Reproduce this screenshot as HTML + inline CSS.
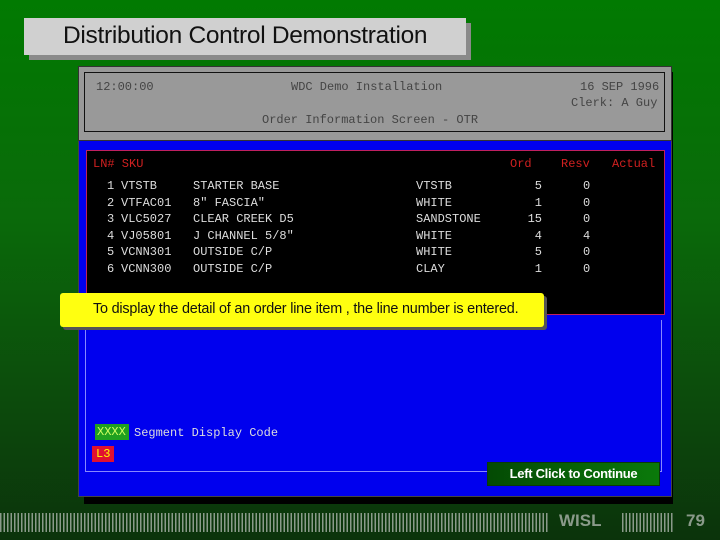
<!DOCTYPE html>
<html><head><style>
*{margin:0;padding:0;box-sizing:border-box}
body{width:720px;height:540px;overflow:hidden;position:relative;background:linear-gradient(#017a01 0%,#0a6a0a 40%,#0c4a0c 75%,#0b330b 100%);font-family:"Liberation Sans",sans-serif}
.a{position:absolute}
.m{font-family:"Liberation Mono",monospace;font-size:12px;white-space:pre;line-height:14px}
.r{position:absolute;font-family:"Liberation Mono",monospace;font-size:12px;color:#ddd;white-space:pre;line-height:16.6px;top:178px}
</style></head><body>
<div class="a" style="left:29px;top:23px;width:442px;height:37px;background:#8a8a8a"></div>
<div class="a" style="left:24px;top:18px;width:442px;height:37px;background:#d0d0d0"></div>
<div class="a" style="left:63px;top:22px;font-size:24.5px;color:#111;letter-spacing:-0.3px">Distribution Control Demonstration</div>

<div class="a" style="left:84px;top:72px;width:589px;height:432px;background:#000"></div>
<div class="a" style="left:78px;top:66px;width:594px;height:431px;background:#0000ee;border:1px solid #444"></div>
<div class="a" style="left:78px;top:66px;width:594px;height:75px;background:#999;border:1px solid #333"></div>
<div class="a" style="left:84px;top:72px;width:581px;height:60px;border:1px solid #111"></div>
<div class="a m" style="left:96px;top:80px;color:#444">12:00:00</div>
<div class="a m" style="left:291px;top:80px;color:#444">WDC Demo Installation</div>
<div class="a m" style="left:580px;top:80px;color:#444">16 SEP 1996</div>
<div class="a m" style="left:571px;top:96px;color:#444">Clerk: A Guy</div>
<div class="a m" style="left:262px;top:113px;color:#444">Order Information Screen - OTR</div>

<div class="a" style="left:85px;top:320px;width:577px;height:152px;border:1px solid #8888ff;border-top:none"></div>
<div class="a" style="left:86px;top:150px;width:579px;height:165px;background:#000;border:1px solid #c02060"></div>
<div class="a m" style="left:93px;top:157px;color:#d02020">LN# SKU</div>
<div class="a m" style="left:510px;top:157px;color:#d02020">Ord</div>
<div class="a m" style="left:561px;top:157px;color:#d02020">Resv</div>
<div class="a m" style="left:612px;top:157px;color:#d02020">Actual</div>
<div class="r" style="left:107px">1
2
3
4
5
6</div>
<div class="r" style="left:121px">VTSTB
VTFAC01
VLC5027
VJ05801
VCNN301
VCNN300</div>
<div class="r" style="left:193px">STARTER BASE
8" FASCIA"
CLEAR CREEK D5
J CHANNEL 5/8"
OUTSIDE C/P
OUTSIDE C/P</div>
<div class="r" style="left:416px">VTSTB
WHITE
SANDSTONE
WHITE
WHITE
CLAY</div>
<div class="r" style="left:525px;text-align:right;width:17px"> 5
 1
15
 4
 5
 1</div>
<div class="r" style="left:583px">0
0
0
4
0
0</div>

<div class="a" style="left:63px;top:296px;width:484px;height:34px;background:#555;border-radius:3px"></div>
<div class="a" style="left:60px;top:293px;width:484px;height:34px;background:#ffff10;border-radius:3px"></div>
<div class="a" style="left:93px;top:301px;font-size:14.4px;color:#111;letter-spacing:-0.2px">To display the detail of an order line item , the line number is entered.</div>

<div class="a m" style="left:95px;top:424px;width:34px;height:16px;background:#20a020;color:#cfff60;padding:1px 0 0 2px">XXXX</div>
<div class="a m" style="left:134px;top:426px;color:#ddd">Segment Display Code</div>
<div class="a m" style="left:92px;top:446px;width:22px;height:16px;background:#e01030;color:#ff0;padding:1px 0 0 4px">L3</div>
<div class="a" style="left:487px;top:462px;width:173px;height:24px;background:linear-gradient(90deg,#044a04,#0a7a0a);border:1px solid #0a3a0a;color:#fff;font-size:13px;font-weight:bold;text-align:center;line-height:22px;letter-spacing:-0.3px">Left Click to Continue</div>

<div class="a" style="left:0;top:513px;width:548px;height:19px;background:repeating-linear-gradient(90deg,#8a9a8a 0 1.5px,transparent 1.5px 3.5px)"></div>
<div class="a" style="left:559px;top:511px;font-size:17px;font-weight:bold;color:#8a9a8a">WISL</div>
<div class="a" style="left:622px;top:513px;width:52px;height:19px;background:repeating-linear-gradient(90deg,#8a9a8a 0 1.5px,transparent 1.5px 3.5px)"></div>
<div class="a" style="left:686px;top:511px;font-size:17px;font-weight:bold;color:#8a9a8a">79</div>
</body></html>
